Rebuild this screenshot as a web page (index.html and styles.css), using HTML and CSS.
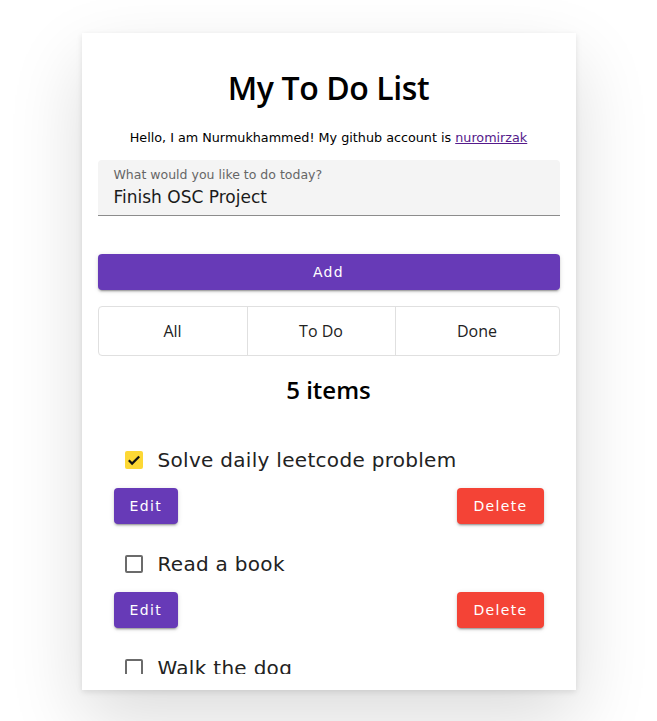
FILE: index.html
```html
<!DOCTYPE html>
<html>
<head>
<meta charset="utf-8">
<link rel="stylesheet" href="styles.css">
</head>
<body>
<main class="card">
  <h1 class="title">My To Do List</h1>
  <p class="hello">Hello, I am Nurmukhammed! My github account is <a href="#" class="link">nuromirzak</a></p>
  <div class="field">
    <span class="field-label">What would you like to do today?</span>
    <span class="field-value">Finish OSC Project</span>
  </div>
  <button class="btn btn-add">Add</button>
  <div class="tabs">
    <div class="tab">All</div>
    <div class="tab">To Do</div>
    <div class="tab">Done</div>
  </div>
  <h2 class="count">5 items</h2>
  <div class="list">
    <div class="item">
      <div class="row">
        <span class="check checked"><svg viewBox="0 0 18 18" width="18" height="18"><path d="M3.8 9.3l3.3 3.3L14.2 5.5" fill="none" stroke="#111" stroke-width="2.2"/></svg></span>
        <span class="label">Solve daily leetcode problem</span>
      </div>
      <div class="actions">
        <button class="btn btn-edit">Edit</button>
        <button class="btn btn-delete">Delete</button>
      </div>
    </div>
    <div class="item">
      <div class="row">
        <span class="check"></span>
        <span class="label">Read a book</span>
      </div>
      <div class="actions">
        <button class="btn btn-edit">Edit</button>
        <button class="btn btn-delete">Delete</button>
      </div>
    </div>
    <div class="item">
      <div class="row">
        <span class="check"></span>
        <span class="label">Walk the dog</span>
      </div>
    </div>
  </div>
</main>
</body>
</html>
```
FILE: styles.css
```css
html, body {
  margin: 0;
  padding: 0;
  background: #ffffff;
}
body {
  padding-top: 33px;
  padding-bottom: 40px;
  font-family: "DejaVu Sans", sans-serif;
  color: #000;
}
.card {
  width: 494px;
  height: 657px;
  margin: 0 auto;
  box-sizing: border-box;
  padding: 16px 16px 16px;
  background: #fff;
  box-shadow: 0 30px 70px rgba(0,0,0,0.14), 0 2px 6px rgba(0,0,0,0.10);
  display: flex;
  flex-direction: column;
}
.title {
  margin: 20px 0 0;
  font-family: "Open Sans", sans-serif;
  font-weight: 600;
  font-size: 32px;
  line-height: 38px;
  letter-spacing: -0.4px;
  text-align: center;
  color: #000;
}
.hello {
  margin: 23px 0 0;
  font-size: 12.75px;
  line-height: 16px;
  text-align: center;
}
.link {
  color: #551a8b;
  text-decoration: underline;
}
.field {
  margin-top: 14px;
  height: 48px;
  background: #f4f4f4;
  border-radius: 4px 4px 0 0;
  border-bottom: 1px solid #8c8c8c;
  display: flex;
  flex-direction: column;
  padding: 7px 16px 0;
}
.field-label {
  font-size: 12.5px;
  line-height: 15px;
  color: #666;
}
.field-value {
  margin-top: 5px;
  font-size: 17px;
  line-height: 20px;
  color: #1a1a1a;
}
.btn {
  border: none;
  border-radius: 4px;
  font-family: "DejaVu Sans", sans-serif;
  font-size: 14px;
  letter-spacing: 1.35px;
  color: #fff;
  height: 36px;
  padding: 0 16px;
  box-shadow: 0 3px 1px -2px rgba(0,0,0,0.2), 0 2px 2px 0 rgba(0,0,0,0.14), 0 1px 5px 0 rgba(0,0,0,0.12);
}
.btn-add {
  margin-top: 38px;
  width: 100%;
  background: #673ab7;
}
.tabs {
  margin-top: 16px;
  height: 50px;
  box-sizing: border-box;
  border: 1px solid #e0e0e0;
  border-radius: 4px;
  display: grid;
  grid-template-columns: 148px 148px 1fr;
}
.tab {
  display: flex;
  align-items: center;
  justify-content: center;
  font-family: "Open Sans", sans-serif;
  font-size: 16px;
  color: #222;
}
.tab + .tab {
  border-left: 1px solid #e0e0e0;
}
.count {
  margin: 20px 0 0;
  font-family: "Open Sans", sans-serif;
  font-weight: 600;
  font-size: 24px;
  line-height: 28px;
  text-align: center;
  color: #000;
}
.list {
  margin-top: 35px;
  flex: 1;
  overflow: hidden;
  min-height: 0;
}
.item {
  padding: 0 16px;
  margin-bottom: 19px;
}
.row {
  height: 42px;
  display: flex;
  align-items: center;
}
.check {
  width: 18px;
  height: 18px;
  margin-left: 11px;
  box-sizing: border-box;
  border: 2px solid #6b6b6b;
  border-radius: 2px;
  display: flex;
}
.check.checked {
  border: none;
  background: #fdd835;
}
.label {
  margin-left: 15px;
  font-size: 20px;
  color: #222;
  letter-spacing: 0.3px;
}
.actions {
  margin-top: 7px;
  display: flex;
  justify-content: space-between;
}
.btn-edit {
  background: #673ab7;
}
.btn-delete {
  background: #f44336;
}
```
